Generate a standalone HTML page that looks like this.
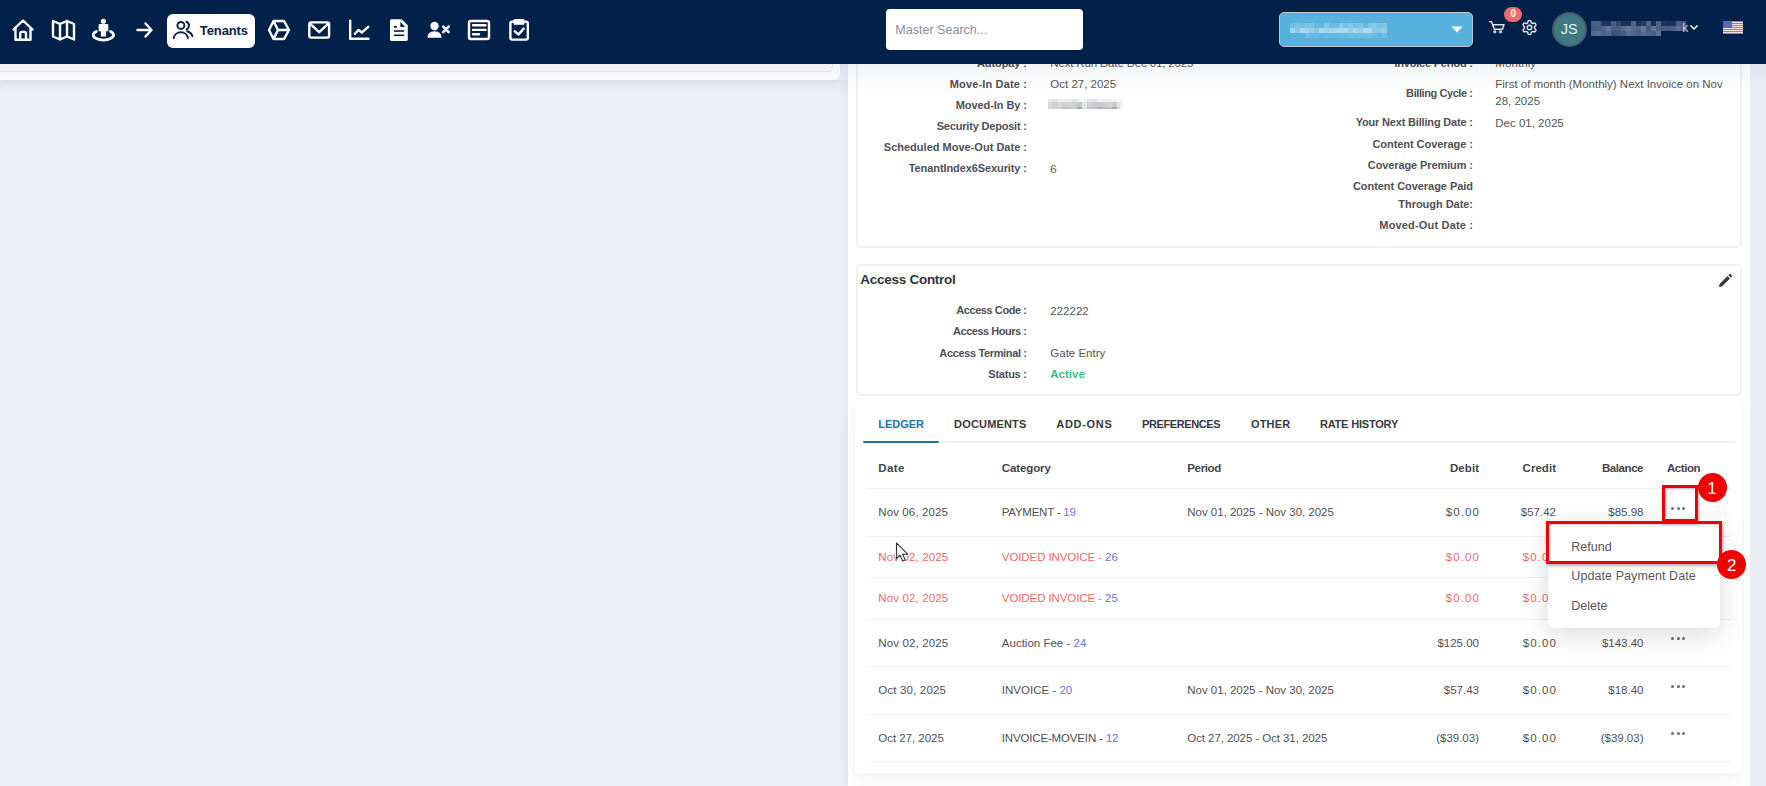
<!DOCTYPE html>
<html><head><meta charset="utf-8"><style>
html,body{margin:0;padding:0;width:1766px;height:786px;overflow:hidden;background:#edf0f5;}
body{position:relative;font-family:"Liberation Sans",sans-serif;}
.t{position:absolute;white-space:nowrap;}
</style></head><body>
<div style="position:absolute;left:0px;top:0px;width:848px;height:786px;background:#edf0f5;"></div>
<div style="position:absolute;left:840px;top:0px;width:8px;height:786px;background:linear-gradient(90deg,#ebeef5,#e6e9f1);"></div>
<div style="position:absolute;left:0px;top:80px;width:848px;height:16px;background:linear-gradient(rgba(60,70,100,0.045),rgba(60,70,100,0));"></div>
<div style="position:absolute;left:0px;top:0px;width:840px;height:80px;background:#ffffff;border-radius:0 0 6px 0;box-shadow:0 2px 5px rgba(0,0,0,0.045);"></div>
<div style="position:absolute;left:0px;top:0px;width:832px;height:71px;background:#fbfbfc;border-radius:0 0 5px 0;border-right:1px solid #ededf0;border-bottom:1px solid #ededf0;"></div>
<div style="position:absolute;left:848px;top:0px;width:902px;height:786px;background:#ffffff;"></div>
<div style="position:absolute;left:1750px;top:0px;width:16px;height:786px;background:#ebeef4;"></div>
<div style="position:absolute;left:856px;top:-10px;width:886px;height:258px;border:2px solid #eef0f6;border-radius:5px;box-sizing:border-box;"></div>
<div style="position:absolute;left:856px;top:263.5px;width:886px;height:132px;border:2px solid #eef0f6;border-radius:5px;box-sizing:border-box;"></div>
<div style="position:absolute;left:855px;top:400px;width:887px;height:373px;background:#fff;border-radius:4px;box-shadow:0 1px 8px rgba(20,30,60,0.04), 0 12px 24px rgba(20,30,60,0.035);"></div>
<div class="t" style="top:56.61px;font-size:11px;line-height:13.75px;font-weight:700;color:#505054;letter-spacing:-0.092px;left:807px;width:220px;text-align:right;transform:translateX(-0.092px);">Autopay :</div>
<div class="t" style="top:56.13px;font-size:11.5px;line-height:14.38px;font-weight:400;color:#555558;letter-spacing:-0.161px;left:1050.30px;">Next Run Date Dec 01, 2025</div>
<div class="t" style="top:77.61px;font-size:11px;line-height:13.75px;font-weight:700;color:#505054;letter-spacing:0.162px;left:807px;width:220px;text-align:right;transform:translateX(0.162px);">Move-In Date :</div>
<div class="t" style="top:77.13px;font-size:11.5px;line-height:14.38px;font-weight:400;color:#555558;left:1050.30px;">Oct 27, 2025</div>
<div class="t" style="top:98.81px;font-size:11px;line-height:13.75px;font-weight:700;color:#505054;letter-spacing:-0.069px;left:807px;width:220px;text-align:right;transform:translateX(-0.069px);">Moved-In By :</div>
<div class="t" style="top:120.11px;font-size:11px;line-height:13.75px;font-weight:700;color:#505054;letter-spacing:-0.190px;left:807px;width:220px;text-align:right;transform:translateX(-0.190px);">Security Deposit :</div>
<div class="t" style="top:141.31px;font-size:11px;line-height:13.75px;font-weight:700;color:#505054;letter-spacing:0.007px;left:807px;width:220px;text-align:right;transform:translateX(0.007px);">Scheduled Move-Out Date :</div>
<div class="t" style="top:162.41px;font-size:11px;line-height:13.75px;font-weight:700;color:#505054;letter-spacing:-0.096px;left:807px;width:220px;text-align:right;transform:translateX(-0.096px);">TenantIndex6Sexurity :</div>
<div class="t" style="top:161.93px;font-size:11.5px;line-height:14.38px;font-weight:400;color:#555558;left:1050.30px;">6</div>
<div style="filter:blur(0.4px)"><div style="position:absolute;left:1048.2px;top:98.8px;width:3.8px;height:3.1px;background:#ececec"></div><div style="position:absolute;left:1048.2px;top:101.9px;width:3.8px;height:5.1px;background:#dcd8d6"></div><div style="position:absolute;left:1048.2px;top:107px;width:3.8px;height:2.2px;background:#d8d4d0"></div><div style="position:absolute;left:1052.0px;top:98.8px;width:4.8px;height:3.1px;background:#dfe2e6"></div><div style="position:absolute;left:1052.0px;top:101.9px;width:4.8px;height:5.1px;background:#cdd1d6"></div><div style="position:absolute;left:1052.0px;top:107px;width:4.8px;height:2.2px;background:#c8ced4"></div><div style="position:absolute;left:1056.8px;top:98.8px;width:5.1px;height:3.1px;background:#eeeeee"></div><div style="position:absolute;left:1056.8px;top:101.9px;width:5.1px;height:5.1px;background:#d6d8db"></div><div style="position:absolute;left:1056.8px;top:107px;width:5.1px;height:2.2px;background:#cfd2d6"></div><div style="position:absolute;left:1061.9px;top:98.8px;width:5.1px;height:3.1px;background:#eeeeee"></div><div style="position:absolute;left:1061.9px;top:101.9px;width:5.1px;height:5.1px;background:#cfcfd0"></div><div style="position:absolute;left:1061.9px;top:107px;width:5.1px;height:2.2px;background:#c2c0c2"></div><div style="position:absolute;left:1067.0px;top:98.8px;width:5.1px;height:3.1px;background:#ecebea"></div><div style="position:absolute;left:1067.0px;top:101.9px;width:5.1px;height:5.1px;background:#d2d0d0"></div><div style="position:absolute;left:1067.0px;top:107px;width:5.1px;height:2.2px;background:#c8c4c6"></div><div style="position:absolute;left:1072.1px;top:98.8px;width:4.9px;height:3.1px;background:#e0e4e8"></div><div style="position:absolute;left:1072.1px;top:101.9px;width:4.9px;height:5.1px;background:#cbd0d4"></div><div style="position:absolute;left:1072.1px;top:107px;width:4.9px;height:2.2px;background:#c6ccd0"></div><div style="position:absolute;left:1077.0px;top:98.8px;width:5.0px;height:3.1px;background:#f0f2f4"></div><div style="position:absolute;left:1077.0px;top:101.9px;width:5.0px;height:5.1px;background:#c4c6cc"></div><div style="position:absolute;left:1077.0px;top:107px;width:5.0px;height:2.2px;background:#a8aab4"></div><div style="position:absolute;left:1082.0px;top:98.8px;width:4.9px;height:3.1px;background:#f6f2f0"></div><div style="position:absolute;left:1082.0px;top:101.9px;width:4.9px;height:5.1px;background:#e8e8e6"></div><div style="position:absolute;left:1082.0px;top:107px;width:4.9px;height:2.2px;background:#dfe0de"></div><div style="position:absolute;left:1086.9px;top:98.8px;width:5.1px;height:3.1px;background:#dfe2e6"></div><div style="position:absolute;left:1086.9px;top:101.9px;width:5.1px;height:5.1px;background:#cdd2d5"></div><div style="position:absolute;left:1086.9px;top:107px;width:5.1px;height:2.2px;background:#c0c6cc"></div><div style="position:absolute;left:1092.0px;top:98.8px;width:5.1px;height:3.1px;background:#dfe2e6"></div><div style="position:absolute;left:1092.0px;top:101.9px;width:5.1px;height:5.1px;background:#d0ccce"></div><div style="position:absolute;left:1092.0px;top:107px;width:5.1px;height:2.2px;background:#cdbfb8"></div><div style="position:absolute;left:1097.1px;top:98.8px;width:5.1px;height:3.1px;background:#f0f0f0"></div><div style="position:absolute;left:1097.1px;top:101.9px;width:5.1px;height:5.1px;background:#c8ccd0"></div><div style="position:absolute;left:1097.1px;top:107px;width:5.1px;height:2.2px;background:#a8b2bc"></div><div style="position:absolute;left:1102.2px;top:98.8px;width:4.8px;height:3.1px;background:#eeeeee"></div><div style="position:absolute;left:1102.2px;top:101.9px;width:4.8px;height:5.1px;background:#cdced2"></div><div style="position:absolute;left:1102.2px;top:107px;width:4.8px;height:2.2px;background:#b8b8c0"></div><div style="position:absolute;left:1107.0px;top:98.8px;width:5.1px;height:3.1px;background:#eeeeee"></div><div style="position:absolute;left:1107.0px;top:101.9px;width:5.1px;height:5.1px;background:#d3d2d3"></div><div style="position:absolute;left:1107.0px;top:107px;width:5.1px;height:2.2px;background:#c0bcbc"></div><div style="position:absolute;left:1112.1px;top:98.8px;width:4.9px;height:3.1px;background:#f2f4f6"></div><div style="position:absolute;left:1112.1px;top:101.9px;width:4.9px;height:5.1px;background:#c8c8cc"></div><div style="position:absolute;left:1112.1px;top:107px;width:4.9px;height:2.2px;background:#a8a8b0"></div><div style="position:absolute;left:1117.0px;top:98.8px;width:3.0px;height:3.1px;background:#f4f6f8"></div><div style="position:absolute;left:1117.0px;top:101.9px;width:3.0px;height:5.1px;background:#dfe4e8"></div><div style="position:absolute;left:1117.0px;top:107px;width:3.0px;height:2.2px;background:#d0d8dc"></div><div style="position:absolute;left:1120.0px;top:98.8px;width:2.8px;height:3.1px;background:#f6f8fa"></div><div style="position:absolute;left:1120.0px;top:101.9px;width:2.8px;height:5.1px;background:#eef4f8"></div><div style="position:absolute;left:1120.0px;top:107px;width:2.8px;height:2.2px;background:#eef4f8"></div></div>
<div class="t" style="top:56.61px;font-size:11px;line-height:13.75px;font-weight:700;color:#505054;letter-spacing:-0.228px;left:1253px;width:220px;text-align:right;transform:translateX(-0.228px);">Invoice Period :</div>
<div class="t" style="top:56.13px;font-size:11.5px;line-height:14.38px;font-weight:400;color:#555558;letter-spacing:0.086px;left:1495.30px;">Monthly</div>
<div class="t" style="top:86.61px;font-size:11px;line-height:13.75px;font-weight:700;color:#505054;letter-spacing:-0.418px;left:1253px;width:220px;text-align:right;transform:translateX(-0.418px);">Billing Cycle :</div>
<div class="t" style="top:76.93px;font-size:11.5px;line-height:14.38px;font-weight:400;color:#555558;letter-spacing:-0.003px;left:1495.30px;">First of month (Monthly) Next Invoice on Nov</div>
<div class="t" style="top:94.33px;font-size:11.5px;line-height:14.38px;font-weight:400;color:#555558;left:1495.30px;">28, 2025</div>
<div class="t" style="top:116.41px;font-size:11px;line-height:13.75px;font-weight:700;color:#505054;letter-spacing:-0.179px;left:1253px;width:220px;text-align:right;transform:translateX(-0.179px);">Your Next Billing Date :</div>
<div class="t" style="top:115.93px;font-size:11.5px;line-height:14.38px;font-weight:400;color:#555558;left:1495.30px;">Dec 01, 2025</div>
<div class="t" style="top:137.51px;font-size:11px;line-height:13.75px;font-weight:700;color:#505054;letter-spacing:-0.051px;left:1253px;width:220px;text-align:right;transform:translateX(-0.051px);">Content Coverage :</div>
<div class="t" style="top:158.91px;font-size:11px;line-height:13.75px;font-weight:700;color:#505054;letter-spacing:-0.105px;left:1253px;width:220px;text-align:right;transform:translateX(-0.105px);">Coverage Premium :</div>
<div class="t" style="top:180.01px;font-size:11px;line-height:13.75px;font-weight:700;color:#505054;letter-spacing:-0.047px;left:1253px;width:220px;text-align:right;transform:translateX(-0.047px);">Content Coverage Paid</div>
<div class="t" style="top:197.61px;font-size:11px;line-height:13.75px;font-weight:700;color:#505054;letter-spacing:-0.039px;left:1253px;width:220px;text-align:right;transform:translateX(-0.039px);">Through Date:</div>
<div class="t" style="top:218.91px;font-size:11px;line-height:13.75px;font-weight:700;color:#505054;letter-spacing:0.176px;left:1253px;width:220px;text-align:right;transform:translateX(0.176px);">Moved-Out Date :</div>
<div class="t" style="top:272.38px;font-size:13.5px;line-height:16.88px;font-weight:700;color:#343437;letter-spacing:-0.272px;left:860.30px;">Access Control</div>
<div class="t" style="top:304.11px;font-size:11px;line-height:13.75px;font-weight:700;color:#505054;letter-spacing:-0.418px;left:807px;width:220px;text-align:right;transform:translateX(-0.418px);">Access Code :</div>
<div class="t" style="top:303.63px;font-size:11.5px;line-height:14.38px;font-weight:400;color:#555558;left:1050.30px;">222222</div>
<div class="t" style="top:325.31px;font-size:11px;line-height:13.75px;font-weight:700;color:#505054;letter-spacing:-0.476px;left:807px;width:220px;text-align:right;transform:translateX(-0.476px);">Access Hours :</div>
<div class="t" style="top:346.51px;font-size:11px;line-height:13.75px;font-weight:700;color:#505054;letter-spacing:-0.353px;left:807px;width:220px;text-align:right;transform:translateX(-0.353px);">Access Terminal :</div>
<div class="t" style="top:346.03px;font-size:11.5px;line-height:14.38px;font-weight:400;color:#555558;left:1050.30px;">Gate Entry</div>
<div class="t" style="top:367.81px;font-size:11px;line-height:13.75px;font-weight:700;color:#505054;letter-spacing:-0.235px;left:807px;width:220px;text-align:right;transform:translateX(-0.235px);">Status :</div>
<div class="t" style="top:367.33px;font-size:11.5px;line-height:14.38px;font-weight:700;color:#34c27f;left:1050.30px;">Active</div>
<svg style="position:absolute;left:1717px;top:273px" width="16" height="16" viewBox="0 0 16 16"><path d="M2 14 L2.6 11 L10.5 3.1 L12.9 5.5 L5 13.4 Z" fill="#3a3a3e"/><path d="M11.4 2.2 L12.5 1.1 Q13 0.7 13.5 1.1 L14.9 2.5 Q15.3 3 14.9 3.5 L13.8 4.6 Z" fill="#3a3a3e"/></svg>
<div class="t" style="top:417.51px;font-size:11px;line-height:13.75px;font-weight:700;color:#1b75a8;letter-spacing:-0.049px;left:878.30px;">LEDGER</div>
<div class="t" style="top:417.51px;font-size:11px;line-height:13.75px;font-weight:700;color:#38383c;letter-spacing:0.164px;left:954.10px;">DOCUMENTS</div>
<div class="t" style="top:417.51px;font-size:11px;line-height:13.75px;font-weight:700;color:#38383c;letter-spacing:0.693px;left:1056.30px;">ADD-ONS</div>
<div class="t" style="top:417.51px;font-size:11px;line-height:13.75px;font-weight:700;color:#38383c;letter-spacing:-0.393px;left:1142.00px;">PREFERENCES</div>
<div class="t" style="top:417.51px;font-size:11px;line-height:13.75px;font-weight:700;color:#38383c;letter-spacing:0.200px;left:1250.90px;">OTHER</div>
<div class="t" style="top:417.51px;font-size:11px;line-height:13.75px;font-weight:700;color:#38383c;letter-spacing:-0.189px;left:1319.90px;">RATE HISTORY</div>
<div style="position:absolute;left:863px;top:441px;width:872px;height:2px;background:#eef0f5;"></div>
<div style="position:absolute;left:863px;top:440.5px;width:76px;height:2.5px;background:#1b75a8;border-radius:1px;"></div>
<div class="t" style="top:461.03px;font-size:11.5px;line-height:14.38px;font-weight:700;color:#444448;letter-spacing:0.354px;left:878.30px;">Date</div>
<div class="t" style="top:461.03px;font-size:11.5px;line-height:14.38px;font-weight:700;color:#444448;letter-spacing:-0.108px;left:1001.80px;">Category</div>
<div class="t" style="top:461.03px;font-size:11.5px;line-height:14.38px;font-weight:700;color:#444448;letter-spacing:-0.359px;left:1187.30px;">Period</div>
<div class="t" style="top:461.03px;font-size:11.5px;line-height:14.38px;font-weight:700;color:#444448;letter-spacing:0.062px;left:1379px;width:100px;text-align:right;transform:translateX(0.062px);">Debit</div>
<div class="t" style="top:461.03px;font-size:11.5px;line-height:14.38px;font-weight:700;color:#444448;letter-spacing:0.033px;left:1456px;width:100px;text-align:right;transform:translateX(0.033px);">Credit</div>
<div class="t" style="top:461.03px;font-size:11.5px;line-height:14.38px;font-weight:700;color:#444448;letter-spacing:-0.435px;left:1543.5px;width:100px;text-align:right;transform:translateX(-0.435px);">Balance</div>
<div class="t" style="top:461.03px;font-size:11.5px;line-height:14.38px;font-weight:700;color:#444448;letter-spacing:-0.436px;left:1667.00px;">Action</div>
<div style="position:absolute;left:867px;top:487.5px;width:864px;height:1px;background:#eceef4;"></div>
<div style="position:absolute;left:867px;top:535.5px;width:864px;height:1px;background:#eceef4;"></div>
<div style="position:absolute;left:867px;top:576.5px;width:864px;height:1px;background:#eceef4;"></div>
<div style="position:absolute;left:867px;top:618.5px;width:864px;height:1px;background:#eceef4;"></div>
<div style="position:absolute;left:867px;top:665.5px;width:864px;height:1px;background:#eceef4;"></div>
<div style="position:absolute;left:867px;top:713.5px;width:864px;height:1px;background:#eceef4;"></div>
<div style="position:absolute;left:867px;top:760.5px;width:864px;height:1px;background:#eceef4;"></div>
<div class="t" style="top:505.03px;font-size:11.5px;line-height:14.38px;font-weight:400;color:#4f4f52;letter-spacing:0.107px;left:878.30px;">Nov 06, 2025</div>
<div class="t" style="top:505.03px;font-size:11.5px;line-height:14.38px;font-weight:400;color:#4f4f52;letter-spacing:-0.246px;left:1001.80px;">PAYMENT - <span style="color:#6d72e4">19</span></div>
<div class="t" style="top:505.03px;font-size:11.5px;line-height:14.38px;font-weight:400;color:#4f4f52;letter-spacing:-0.017px;left:1187.30px;">Nov 01, 2025 - Nov 30, 2025</div>
<div class="t" style="top:505.03px;font-size:11.5px;line-height:14.38px;font-weight:400;color:#4f4f52;letter-spacing:1.105px;left:1379px;width:100px;text-align:right;transform:translateX(1.105px);">$0.00</div>
<div class="t" style="top:505.03px;font-size:11.5px;line-height:14.38px;font-weight:400;color:#4f4f52;left:1456px;width:100px;text-align:right;">$57.42</div>
<div class="t" style="top:505.03px;font-size:11.5px;line-height:14.38px;font-weight:400;color:#4f4f52;left:1543.5px;width:100px;text-align:right;">$85.98</div>
<div style="position:absolute;left:1671.4px;top:506.50000000000006px;width:3px;height:3px;background:#646d86;border-radius:50%;"></div>
<div style="position:absolute;left:1676.5px;top:506.50000000000006px;width:3px;height:3px;background:#646d86;border-radius:50%;"></div>
<div style="position:absolute;left:1681.6000000000001px;top:506.50000000000006px;width:3px;height:3px;background:#646d86;border-radius:50%;"></div>
<div class="t" style="top:549.83px;font-size:11.5px;line-height:14.38px;font-weight:400;color:#f06868;letter-spacing:0.134px;left:878.30px;">Nov 02, 2025</div>
<div class="t" style="top:549.83px;font-size:11.5px;line-height:14.38px;font-weight:400;color:#f06868;letter-spacing:-0.089px;left:1001.80px;">VOIDED INVOICE - <span style="color:#6d72e4">26</span></div>
<div class="t" style="top:549.83px;font-size:11.5px;line-height:14.38px;font-weight:400;color:#f06868;letter-spacing:1.105px;left:1379px;width:100px;text-align:right;transform:translateX(1.105px);">$0.00</div>
<div class="t" style="top:549.83px;font-size:11.5px;line-height:14.38px;font-weight:400;color:#f06868;letter-spacing:1.105px;left:1456px;width:100px;text-align:right;transform:translateX(1.105px);">$0.00</div>
<div class="t" style="top:591.03px;font-size:11.5px;line-height:14.38px;font-weight:400;color:#f06868;letter-spacing:0.134px;left:878.30px;">Nov 02, 2025</div>
<div class="t" style="top:591.03px;font-size:11.5px;line-height:14.38px;font-weight:400;color:#f06868;letter-spacing:-0.089px;left:1001.80px;">VOIDED INVOICE - <span style="color:#6d72e4">25</span></div>
<div class="t" style="top:591.03px;font-size:11.5px;line-height:14.38px;font-weight:400;color:#f06868;letter-spacing:1.105px;left:1379px;width:100px;text-align:right;transform:translateX(1.105px);">$0.00</div>
<div class="t" style="top:591.03px;font-size:11.5px;line-height:14.38px;font-weight:400;color:#f06868;letter-spacing:1.105px;left:1456px;width:100px;text-align:right;transform:translateX(1.105px);">$0.00</div>
<div class="t" style="top:635.93px;font-size:11.5px;line-height:14.38px;font-weight:400;color:#4f4f52;letter-spacing:0.134px;left:878.30px;">Nov 02, 2025</div>
<div class="t" style="top:635.93px;font-size:11.5px;line-height:14.38px;font-weight:400;color:#4f4f52;letter-spacing:0.007px;left:1001.80px;">Auction Fee - <span style="color:#6d72e4">24</span></div>
<div class="t" style="top:635.93px;font-size:11.5px;line-height:14.38px;font-weight:400;color:#4f4f52;left:1379px;width:100px;text-align:right;">$125.00</div>
<div class="t" style="top:635.93px;font-size:11.5px;line-height:14.38px;font-weight:400;color:#4f4f52;letter-spacing:1.105px;left:1456px;width:100px;text-align:right;transform:translateX(1.105px);">$0.00</div>
<div class="t" style="top:635.93px;font-size:11.5px;line-height:14.38px;font-weight:400;color:#4f4f52;left:1543.5px;width:100px;text-align:right;">$143.40</div>
<div style="position:absolute;left:1671.4px;top:637.4px;width:3px;height:3px;background:#646d86;border-radius:50%;"></div>
<div style="position:absolute;left:1676.5px;top:637.4px;width:3px;height:3px;background:#646d86;border-radius:50%;"></div>
<div style="position:absolute;left:1681.6000000000001px;top:637.4px;width:3px;height:3px;background:#646d86;border-radius:50%;"></div>
<div class="t" style="top:683.13px;font-size:11.5px;line-height:14.38px;font-weight:400;color:#4f4f52;letter-spacing:0.158px;left:878.30px;">Oct 30, 2025</div>
<div class="t" style="top:683.13px;font-size:11.5px;line-height:14.38px;font-weight:400;color:#4f4f52;letter-spacing:0.008px;left:1001.80px;">INVOICE - <span style="color:#6d72e4">20</span></div>
<div class="t" style="top:683.13px;font-size:11.5px;line-height:14.38px;font-weight:400;color:#4f4f52;letter-spacing:-0.017px;left:1187.30px;">Nov 01, 2025 - Nov 30, 2025</div>
<div class="t" style="top:683.13px;font-size:11.5px;line-height:14.38px;font-weight:400;color:#4f4f52;left:1379px;width:100px;text-align:right;">$57.43</div>
<div class="t" style="top:683.13px;font-size:11.5px;line-height:14.38px;font-weight:400;color:#4f4f52;letter-spacing:1.105px;left:1456px;width:100px;text-align:right;transform:translateX(1.105px);">$0.00</div>
<div class="t" style="top:683.13px;font-size:11.5px;line-height:14.38px;font-weight:400;color:#4f4f52;left:1543.5px;width:100px;text-align:right;">$18.40</div>
<div style="position:absolute;left:1671.4px;top:684.5999999999999px;width:3px;height:3px;background:#646d86;border-radius:50%;"></div>
<div style="position:absolute;left:1676.5px;top:684.5999999999999px;width:3px;height:3px;background:#646d86;border-radius:50%;"></div>
<div style="position:absolute;left:1681.6000000000001px;top:684.5999999999999px;width:3px;height:3px;background:#646d86;border-radius:50%;"></div>
<div class="t" style="top:730.73px;font-size:11.5px;line-height:14.38px;font-weight:400;color:#4f4f52;letter-spacing:-0.033px;left:878.30px;">Oct 27, 2025</div>
<div class="t" style="top:730.73px;font-size:11.5px;line-height:14.38px;font-weight:400;color:#4f4f52;letter-spacing:-0.161px;left:1001.80px;">INVOICE-MOVEIN - <span style="color:#6d72e4">12</span></div>
<div class="t" style="top:730.73px;font-size:11.5px;line-height:14.38px;font-weight:400;color:#4f4f52;letter-spacing:-0.074px;left:1187.30px;">Oct 27, 2025 - Oct 31, 2025</div>
<div class="t" style="top:730.73px;font-size:11.5px;line-height:14.38px;font-weight:400;color:#4f4f52;left:1379px;width:100px;text-align:right;">($39.03)</div>
<div class="t" style="top:730.73px;font-size:11.5px;line-height:14.38px;font-weight:400;color:#4f4f52;letter-spacing:1.105px;left:1456px;width:100px;text-align:right;transform:translateX(1.105px);">$0.00</div>
<div class="t" style="top:730.73px;font-size:11.5px;line-height:14.38px;font-weight:400;color:#4f4f52;left:1543.5px;width:100px;text-align:right;">($39.03)</div>
<div style="position:absolute;left:1671.4px;top:732.1999999999999px;width:3px;height:3px;background:#646d86;border-radius:50%;"></div>
<div style="position:absolute;left:1676.5px;top:732.1999999999999px;width:3px;height:3px;background:#646d86;border-radius:50%;"></div>
<div style="position:absolute;left:1681.6000000000001px;top:732.1999999999999px;width:3px;height:3px;background:#646d86;border-radius:50%;"></div>
<div style="position:absolute;left:1548px;top:522px;width:172px;height:106px;background:#fff;border-radius:6px;box-shadow:0 6px 26px rgba(0,0,0,0.15);"></div>
<div class="t" style="top:539.86px;font-size:12.5px;line-height:15.62px;font-weight:400;color:#555558;left:1571.30px;">Refund</div>
<div class="t" style="top:569.36px;font-size:12.5px;line-height:15.62px;font-weight:400;color:#58585c;letter-spacing:0.083px;left:1571.30px;">Update Payment Date</div>
<div class="t" style="top:598.86px;font-size:12.5px;line-height:15.62px;font-weight:400;color:#555558;left:1571.30px;">Delete</div>
<div style="position:absolute;left:1662px;top:484.5px;width:36px;height:37px;border:3px solid #f20000;box-sizing:border-box;box-shadow:1px 2px 3px rgba(0,0,0,0.3), inset 1px 1px 3px rgba(0,0,0,0.25);"></div>
<div style="position:absolute;left:1546px;top:521px;width:176px;height:43px;border:3px solid #f20000;box-sizing:border-box;box-shadow:1px 2px 3px rgba(0,0,0,0.3), inset 1px 1px 3px rgba(0,0,0,0.2);"></div>
<div style="position:absolute;left:1697.5px;top:473px;width:29px;height:29px;background:#f00000;border-radius:50%;"></div>
<div class="t" style="top:477.98px;font-size:17px;line-height:21.25px;font-weight:400;color:#fff;left:1697.5px;width:29px;text-align:center;">1</div>
<div style="position:absolute;left:1717px;top:550px;width:29.4px;height:29.4px;background:#f00000;border-radius:50%;"></div>
<div class="t" style="top:554.98px;font-size:17px;line-height:21.25px;font-weight:400;color:#fff;left:1717.2px;width:29px;text-align:center;">2</div>
<svg style="position:absolute;left:895px;top:541px" width="16" height="22" viewBox="0 0 16 22"><path d="M1.5 1.8 L1.5 17.6 L4.9 14.2 L7.7 19.9 L10.2 18.8 L7.5 13.2 L12.6 13.2 Z" fill="#fff" stroke="#33363d" stroke-width="1.1" stroke-linejoin="round"/></svg>
<div style="position:absolute;left:0px;top:64px;width:1766px;height:30px;background:linear-gradient(rgba(30,40,90,0.055),rgba(30,40,90,0.015) 60%,rgba(30,40,90,0));"></div>
<div style="position:absolute;left:0px;top:0px;width:1766px;height:64px;background:#01204a;"></div>
<svg style="position:absolute;left:0;top:0" width="560" height="63" viewBox="0 0 560 63" fill="none" stroke="#fff" stroke-width="2.4" stroke-linecap="round" stroke-linejoin="round">
<path d="M13.5 29.5 L23 20.5 L32.5 29.5 M15.5 27.5 V39.8 H30.5 V27.5 M20.2 39.8 V33.6 Q20.2 31.9 21.9 31.9 H24.3 Q26 31.9 26 33.6 V39.8"/>
<path d="M53 21 L60 24 L67 21 L74 24 V39.5 L67 36.5 L60 39.5 L53 36.5 Z M60 24 V39.5 M67 21 V36.5"/>
<circle cx="103.4" cy="21.2" r="2.55" fill="#fff" stroke="none"/>
<path d="M99.6 24 H107.3 Q108.3 24 108.3 25 V31.2 H106.1 V36.6 H100.8 V31.2 H98.6 V25 Q98.6 24 99.6 24 Z" fill="#fff" stroke="none"/>
<path d="M96.3 31.5 A10.1 5 0 1 0 110.5 31.5" stroke-width="2.8"/>
<path d="M137.5 30 H151.5 M145.5 23.5 L151.5 30 L145.5 36.5"/>
<path d="M269 30 L273.5 21 H284 L289 30 L284 39 H273.5 Z M273.5 21 L278 30 H289 M278 30 L273.5 39" />
<rect x="309.3" y="22.4" width="19.8" height="15.2" rx="1.8"/>
<path d="M310 23.6 L319.2 32.2 L328.4 23.6"/>
<path d="M350.2 20.6 V38.8 H368.4 M354.8 33.8 L358.7 29.9 L361.8 32.7 L368.2 26.8"/>
<rect x="469" y="21" width="20" height="18" rx="2"/>
<path d="M473 25.3 H485.5 M473 29.9 H485.5 M473 34.3 H479"/>
<rect x="510.4" y="21.6" width="17.4" height="18" rx="1.8"/>
<path d="M514.4 19.6 H524 V24.2 H514.4 Z" fill="#fff" stroke-width="1"/>
<path d="M514.8 31.3 L518.6 34.5 L523.6 28.6"/>
</svg>
<svg style="position:absolute;left:389px;top:18px" width="20" height="24" viewBox="0 0 20 24"><path d="M2.4 1.2 H12.6 L18.8 7.2 V21.6 Q18.8 23 17.4 23 H2.4 Q1 23 1 21.6 V2.6 Q1 1.2 2.4 1.2 Z" fill="#fff"/><path d="M11.4 3.7 V8.9 H16.1 Z" fill="#01204a"/><rect x="4.9" y="8" width="3" height="1.7" fill="#01204a"/><rect x="4.9" y="12.2" width="10.3" height="1.6" fill="#01204a"/><rect x="4.9" y="16.5" width="10.3" height="1.6" fill="#01204a"/></svg>
<svg style="position:absolute;left:427px;top:21px" width="24" height="18" viewBox="0 0 24 18"><circle cx="7.5" cy="5" r="4.2" fill="#fff"/><path d="M0.5 16.8 Q0.5 10.3 7.5 10.3 Q14.5 10.3 14.5 16.8 Z" fill="#fff"/><path d="M16.2 5.6 L21.6 11.2 M21.6 5.6 L16.2 11.2" stroke="#fff" stroke-width="2.5" stroke-linecap="round"/></svg>
<div style="position:absolute;left:167px;top:14px;width:88px;height:34px;background:#fff;border-radius:6px;"></div>
<svg style="position:absolute;left:171px;top:20px" width="24" height="20" viewBox="0 0 24 20" fill="none" stroke="#0d2149" stroke-width="2" stroke-linecap="round"><circle cx="9.9" cy="5.4" r="3.5"/><path d="M2.7 18 A7.2 6.4 0 0 1 17 18"/><path d="M15.4 1.7 Q18.4 3.4 17.9 6.4 Q17.5 8.4 15.6 9.3"/><path d="M16.2 11.2 Q20.6 12.8 21.4 16.2"/></svg>
<div class="t" style="top:23.07px;font-size:13px;line-height:16.25px;font-weight:700;color:#0e2149;letter-spacing:-0.098px;left:199.80px;">Tenants</div>
<div style="position:absolute;left:886px;top:9px;width:197px;height:41px;background:#fff;border-radius:4px;"></div>
<div class="t" style="top:23.36px;font-size:12.5px;line-height:15.62px;font-weight:400;color:#8a8d9e;letter-spacing:0.020px;left:895.30px;">Master Search...</div>
<div style="position:absolute;left:1279px;top:12px;width:194px;height:35px;background:#56b1dc;border-radius:5px;border:1px solid #b9c6d0;box-sizing:border-box;"></div>
<div style="position:absolute;left:1290.00px;top:23.30px;width:4.9px;height:4.95px;background:#6cbbe0"></div><div style="position:absolute;left:1294.85px;top:23.30px;width:4.9px;height:4.95px;background:#79c1e3"></div><div style="position:absolute;left:1299.70px;top:23.30px;width:4.9px;height:4.95px;background:#71bee2"></div><div style="position:absolute;left:1304.55px;top:23.30px;width:4.9px;height:4.95px;background:#7bc2e4"></div><div style="position:absolute;left:1309.40px;top:23.30px;width:4.9px;height:4.95px;background:#7cc3e4"></div><div style="position:absolute;left:1314.25px;top:23.30px;width:4.9px;height:4.95px;background:#64b8df"></div><div style="position:absolute;left:1319.10px;top:23.30px;width:4.9px;height:4.95px;background:#62b6de"></div><div style="position:absolute;left:1323.95px;top:23.30px;width:4.9px;height:4.95px;background:#85c7e6"></div><div style="position:absolute;left:1328.80px;top:23.30px;width:4.9px;height:4.95px;background:#6dbbe1"></div><div style="position:absolute;left:1333.65px;top:23.30px;width:4.9px;height:4.95px;background:#6cbbe0"></div><div style="position:absolute;left:1338.50px;top:23.30px;width:4.9px;height:4.95px;background:#8ccae8"></div><div style="position:absolute;left:1343.35px;top:23.30px;width:4.9px;height:4.95px;background:#76c0e3"></div><div style="position:absolute;left:1348.20px;top:23.30px;width:4.9px;height:4.95px;background:#85c7e6"></div><div style="position:absolute;left:1353.05px;top:23.30px;width:4.9px;height:4.95px;background:#76c0e3"></div><div style="position:absolute;left:1357.90px;top:23.30px;width:4.9px;height:4.95px;background:#7dc3e4"></div><div style="position:absolute;left:1362.75px;top:23.30px;width:4.9px;height:4.95px;background:#68b9e0"></div><div style="position:absolute;left:1367.60px;top:23.30px;width:4.9px;height:4.95px;background:#7dc3e4"></div><div style="position:absolute;left:1372.45px;top:23.30px;width:4.9px;height:4.95px;background:#87c8e6"></div><div style="position:absolute;left:1377.30px;top:23.30px;width:4.9px;height:4.95px;background:#78c1e3"></div><div style="position:absolute;left:1382.15px;top:23.30px;width:4.9px;height:4.95px;background:#81c5e5"></div><div style="position:absolute;left:1290.00px;top:28.20px;width:4.9px;height:4.95px;background:#a3d5ed"></div><div style="position:absolute;left:1294.85px;top:28.20px;width:4.9px;height:4.95px;background:#89c9e7"></div><div style="position:absolute;left:1299.70px;top:28.20px;width:4.9px;height:4.95px;background:#a7d6ed"></div><div style="position:absolute;left:1304.55px;top:28.20px;width:4.9px;height:4.95px;background:#a0d3ec"></div><div style="position:absolute;left:1309.40px;top:28.20px;width:4.9px;height:4.95px;background:#93cde9"></div><div style="position:absolute;left:1314.25px;top:28.20px;width:4.9px;height:4.95px;background:#88c8e7"></div><div style="position:absolute;left:1319.10px;top:28.20px;width:4.9px;height:4.95px;background:#abd9ee"></div><div style="position:absolute;left:1323.95px;top:28.20px;width:4.9px;height:4.95px;background:#9ad1eb"></div><div style="position:absolute;left:1328.80px;top:28.20px;width:4.9px;height:4.95px;background:#a5d6ed"></div><div style="position:absolute;left:1333.65px;top:28.20px;width:4.9px;height:4.95px;background:#acd9ef"></div><div style="position:absolute;left:1338.50px;top:28.20px;width:4.9px;height:4.95px;background:#a5d6ed"></div><div style="position:absolute;left:1343.35px;top:28.20px;width:4.9px;height:4.95px;background:#aedaef"></div><div style="position:absolute;left:1348.20px;top:28.20px;width:4.9px;height:4.95px;background:#97cfea"></div><div style="position:absolute;left:1353.05px;top:28.20px;width:4.9px;height:4.95px;background:#a8d7ee"></div><div style="position:absolute;left:1357.90px;top:28.20px;width:4.9px;height:4.95px;background:#99d0eb"></div><div style="position:absolute;left:1362.75px;top:28.20px;width:4.9px;height:4.95px;background:#aedaef"></div><div style="position:absolute;left:1367.60px;top:28.20px;width:4.9px;height:4.95px;background:#acd9ef"></div><div style="position:absolute;left:1372.45px;top:28.20px;width:4.9px;height:4.95px;background:#8ac9e7"></div><div style="position:absolute;left:1377.30px;top:28.20px;width:4.9px;height:4.95px;background:#8ccae8"></div><div style="position:absolute;left:1382.15px;top:28.20px;width:4.9px;height:4.95px;background:#90cce8"></div><div style="position:absolute;left:1290.00px;top:33.10px;width:4.9px;height:4.95px;background:#59b2dc"></div><div style="position:absolute;left:1294.85px;top:33.10px;width:4.9px;height:4.95px;background:#59b2dc"></div><div style="position:absolute;left:1299.70px;top:33.10px;width:4.9px;height:4.95px;background:#59b2dc"></div><div style="position:absolute;left:1304.55px;top:33.10px;width:4.9px;height:4.95px;background:#73bee2"></div><div style="position:absolute;left:1309.40px;top:33.10px;width:4.9px;height:4.95px;background:#65b8df"></div><div style="position:absolute;left:1314.25px;top:33.10px;width:4.9px;height:4.95px;background:#6abae0"></div><div style="position:absolute;left:1319.10px;top:33.10px;width:4.9px;height:4.95px;background:#61b6de"></div><div style="position:absolute;left:1323.95px;top:33.10px;width:4.9px;height:4.95px;background:#67b9df"></div><div style="position:absolute;left:1328.80px;top:33.10px;width:4.9px;height:4.95px;background:#64b7df"></div><div style="position:absolute;left:1333.65px;top:33.10px;width:4.9px;height:4.95px;background:#63b7de"></div><div style="position:absolute;left:1338.50px;top:33.10px;width:4.9px;height:4.95px;background:#69bae0"></div><div style="position:absolute;left:1343.35px;top:33.10px;width:4.9px;height:4.95px;background:#69bae0"></div><div style="position:absolute;left:1348.20px;top:33.10px;width:4.9px;height:4.95px;background:#71bee2"></div><div style="position:absolute;left:1353.05px;top:33.10px;width:4.9px;height:4.95px;background:#6bbbe0"></div><div style="position:absolute;left:1357.90px;top:33.10px;width:4.9px;height:4.95px;background:#72bee2"></div><div style="position:absolute;left:1362.75px;top:33.10px;width:4.9px;height:4.95px;background:#70bde1"></div><div style="position:absolute;left:1367.60px;top:33.10px;width:4.9px;height:4.95px;background:#74bfe2"></div><div style="position:absolute;left:1372.45px;top:33.10px;width:4.9px;height:4.95px;background:#6bbbe0"></div><div style="position:absolute;left:1377.30px;top:33.10px;width:4.9px;height:4.95px;background:#5eb4dd"></div><div style="position:absolute;left:1382.15px;top:33.10px;width:4.9px;height:4.95px;background:#70bde1"></div>
<svg style="position:absolute;left:1451px;top:26px" width="12" height="7" viewBox="0 0 12 7"><path d="M0.5 0.5 H11.5 L6 6.5 Z" fill="#fff"/></svg>
<svg style="position:absolute;left:1488px;top:20px" width="18" height="15" viewBox="0 0 18 15" fill="none" stroke="#dfe2e8" stroke-width="1.5" stroke-linecap="round" stroke-linejoin="round"><path d="M1.8 1.8 H3.6 L6.3 9.2 H14.4 L16 4.8 H4.9"/><rect x="6" y="10.8" width="2" height="2" fill="#dfe2e8" stroke-width="0.6"/><rect x="11.6" y="10.8" width="2" height="2" fill="#dfe2e8" stroke-width="0.6"/></svg>
<div style="position:absolute;left:1504.4px;top:7.2px;width:17.6px;height:14.7px;background:#f06a6a;border-radius:8px;"></div>
<div class="t" style="top:7.89px;font-size:10px;line-height:12.5px;font-weight:700;color:#fff;left:1504.2px;width:18px;text-align:center;">0</div>
<svg style="position:absolute;left:1521.5px;top:20px" width="15" height="15" viewBox="0 0 15 15"><path d="M12.50 7.50 L12.49 7.83 L12.46 8.15 L12.78 8.55 L13.30 9.05 L13.76 9.63 L13.97 10.18 L13.78 10.60 L13.56 11.00 L13.32 11.39 L13.05 11.76 L12.47 11.86 L11.74 11.74 L11.05 11.55 L10.54 11.47 L10.28 11.66 L10.00 11.83 L9.71 11.98 L9.41 12.12 L9.23 12.60 L9.05 13.30 L8.79 13.99 L8.41 14.44 L7.96 14.49 L7.50 14.50 L7.04 14.49 L6.59 14.44 L6.21 13.99 L5.95 13.30 L5.77 12.60 L5.59 12.12 L5.29 11.98 L5.00 11.83 L4.72 11.66 L4.46 11.47 L3.95 11.55 L3.26 11.74 L2.53 11.86 L1.95 11.76 L1.68 11.39 L1.44 11.00 L1.22 10.60 L1.03 10.18 L1.24 9.63 L1.70 9.05 L2.22 8.55 L2.54 8.15 L2.51 7.83 L2.50 7.50 L2.51 7.17 L2.54 6.85 L2.22 6.45 L1.70 5.95 L1.24 5.37 L1.03 4.82 L1.22 4.40 L1.44 4.00 L1.68 3.61 L1.95 3.24 L2.53 3.14 L3.26 3.26 L3.95 3.45 L4.46 3.53 L4.72 3.34 L5.00 3.17 L5.29 3.02 L5.59 2.88 L5.77 2.40 L5.95 1.70 L6.21 1.01 L6.59 0.56 L7.04 0.51 L7.50 0.50 L7.96 0.51 L8.41 0.56 L8.79 1.01 L9.05 1.70 L9.23 2.40 L9.41 2.88 L9.71 3.02 L10.00 3.17 L10.28 3.34 L10.54 3.53 L11.05 3.45 L11.74 3.26 L12.47 3.14 L13.05 3.24 L13.32 3.61 L13.56 4.00 L13.78 4.40 L13.97 4.82 L13.76 5.37 L13.30 5.95 L12.78 6.45 L12.46 6.85 L12.49 7.17 Z" fill="none" stroke="#dfe2e8" stroke-width="1.5" stroke-linejoin="round"/><circle cx="7.5" cy="7.5" r="2.2" fill="none" stroke="#dfe2e8" stroke-width="1.4"/></svg>
<div style="position:absolute;left:1552px;top:12px;width:35px;height:35px;background:#3e7a82;border:2px solid #4b5a70;border-radius:50%;box-sizing:border-box;"></div>
<div class="t" style="top:20.22px;font-size:14.5px;line-height:18.12px;font-weight:400;color:#e6eef0;left:1551.8px;width:35px;text-align:center;">JS</div>
<div style="position:absolute;left:1591px;top:21px;width:5px;height:5px;background:#4b6084"></div><div style="position:absolute;left:1596px;top:21px;width:5px;height:5px;background:#4b6084"></div><div style="position:absolute;left:1601px;top:21px;width:5px;height:5px;background:#213a64"></div><div style="position:absolute;left:1606px;top:21px;width:5px;height:5px;background:#1c3560"></div><div style="position:absolute;left:1611px;top:21px;width:5px;height:5px;background:#465c80"></div><div style="position:absolute;left:1616px;top:21px;width:5px;height:5px;background:#314870"></div><div style="position:absolute;left:1621px;top:21px;width:5px;height:5px;background:#17305c"></div><div style="position:absolute;left:1626px;top:21px;width:5px;height:5px;background:#17305c"></div><div style="position:absolute;left:1631px;top:21px;width:5px;height:5px;background:#506588"></div><div style="position:absolute;left:1636px;top:21px;width:5px;height:5px;background:#17305c"></div><div style="position:absolute;left:1641px;top:21px;width:5px;height:5px;background:#213a64"></div><div style="position:absolute;left:1646px;top:21px;width:5px;height:5px;background:#506588"></div><div style="position:absolute;left:1651px;top:21px;width:5px;height:5px;background:#17305c"></div><div style="position:absolute;left:1656px;top:21px;width:5px;height:5px;background:#506588"></div><div style="position:absolute;left:1661px;top:21px;width:5px;height:5px;background:#1c3560"></div><div style="position:absolute;left:1666px;top:21px;width:5px;height:5px;background:#17305c"></div><div style="position:absolute;left:1671px;top:21px;width:5px;height:5px;background:#17305c"></div><div style="position:absolute;left:1676px;top:21px;width:5px;height:5px;background:#465c80"></div><div style="position:absolute;left:1681px;top:21px;width:5px;height:5px;background:#465c80"></div><div style="position:absolute;left:1591px;top:26px;width:5px;height:5px;background:#43597d"></div><div style="position:absolute;left:1596px;top:26px;width:5px;height:5px;background:#445a7e"></div><div style="position:absolute;left:1601px;top:26px;width:5px;height:5px;background:#506587"></div><div style="position:absolute;left:1606px;top:26px;width:5px;height:5px;background:#5e7293"></div><div style="position:absolute;left:1611px;top:26px;width:5px;height:5px;background:#455b7f"></div><div style="position:absolute;left:1616px;top:26px;width:5px;height:5px;background:#485e82"></div><div style="position:absolute;left:1621px;top:26px;width:5px;height:5px;background:#576c8d"></div><div style="position:absolute;left:1626px;top:26px;width:5px;height:5px;background:#637796"></div><div style="position:absolute;left:1631px;top:26px;width:5px;height:5px;background:#556a8c"></div><div style="position:absolute;left:1636px;top:26px;width:5px;height:5px;background:#4f6487"></div><div style="position:absolute;left:1641px;top:26px;width:5px;height:5px;background:#647897"></div><div style="position:absolute;left:1646px;top:26px;width:5px;height:5px;background:#42587d"></div><div style="position:absolute;left:1651px;top:26px;width:5px;height:5px;background:#607494"></div><div style="position:absolute;left:1656px;top:26px;width:5px;height:5px;background:#4b6084"></div><div style="position:absolute;left:1661px;top:26px;width:5px;height:5px;background:#465c80"></div><div style="position:absolute;left:1666px;top:26px;width:5px;height:5px;background:#455b7f"></div><div style="position:absolute;left:1671px;top:26px;width:5px;height:5px;background:#4c6184"></div><div style="position:absolute;left:1676px;top:26px;width:5px;height:5px;background:#5e7292"></div><div style="position:absolute;left:1681px;top:26px;width:5px;height:5px;background:#475d81"></div><div style="position:absolute;left:1591px;top:31px;width:5px;height:5px;background:#566b8c"></div><div style="position:absolute;left:1596px;top:31px;width:5px;height:5px;background:#596e8f"></div><div style="position:absolute;left:1601px;top:31px;width:5px;height:5px;background:#4d6285"></div><div style="position:absolute;left:1606px;top:31px;width:5px;height:5px;background:#556a8b"></div><div style="position:absolute;left:1611px;top:31px;width:5px;height:5px;background:#3e557a"></div><div style="position:absolute;left:1616px;top:31px;width:5px;height:5px;background:#3e547a"></div><div style="position:absolute;left:1621px;top:31px;width:5px;height:5px;background:#455b7f"></div><div style="position:absolute;left:1626px;top:31px;width:5px;height:5px;background:#5b6f90"></div><div style="position:absolute;left:1631px;top:31px;width:5px;height:5px;background:#4f6487"></div><div style="position:absolute;left:1636px;top:31px;width:5px;height:5px;background:#4a5f83"></div><div style="position:absolute;left:1641px;top:31px;width:5px;height:5px;background:#576b8d"></div><div style="position:absolute;left:1646px;top:31px;width:5px;height:5px;background:#506588"></div><div style="position:absolute;left:1651px;top:31px;width:5px;height:5px;background:#495f82"></div><div style="position:absolute;left:1656px;top:31px;width:5px;height:5px;background:#607494"></div>
<div class="t" style="top:21.34px;font-size:12px;line-height:15.0px;font-weight:400;color:#c9d0dc;left:1682.30px;">k</div>
<svg style="position:absolute;left:1689px;top:24px" width="10" height="7" viewBox="0 0 10 7"><path d="M1.5 1.5 L5 5 L8.5 1.5" fill="none" stroke="#fff" stroke-width="1.5"/></svg>
<svg style="position:absolute;left:1723px;top:21px" width="20" height="13" viewBox="0 0 20 13"><rect width="20" height="13" fill="#f2dde0"/><rect y="0" width="20" height="1" fill="#ee6670"/><rect y="2" width="20" height="1" fill="#ee6670"/><rect y="4" width="20" height="1" fill="#ee6670"/><rect y="6" width="20" height="1" fill="#ee6670"/><rect y="8" width="20" height="1" fill="#ee6670"/><rect y="10" width="20" height="1" fill="#ee6670"/><rect y="12" width="20" height="1" fill="#ee6670"/><rect width="9" height="7" fill="#6168b0"/></svg>
</body></html>
